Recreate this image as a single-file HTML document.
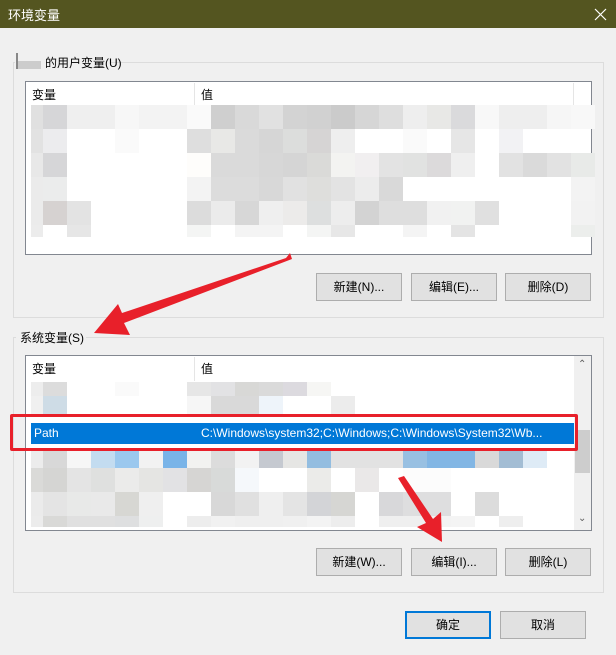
<!DOCTYPE html>
<html><head><meta charset="utf-8"><style>
*{box-sizing:border-box;margin:0;padding:0}
body{width:616px;height:655px;background:#f0f0f0;position:relative;overflow:hidden;font-family:"Liberation Sans","Noto Sans CJK SC",sans-serif;font-size:12px;color:#000}
.a{position:absolute}
.title{left:0;top:0;width:616px;height:28px;background:#545520;color:#fff;font-size:13px}
.grp{border:1px solid #dcdcdc}
.list{background:#fff;border:1px solid #828790}
.btn{background:#e1e1e1;border:1px solid #adadad;text-align:center;line-height:26px}
.cell{position:absolute}
</style></head><body>
<div class="a title"><span class="a" style="left:8px;top:5px">环境变量</span>
<svg class="a" style="left:594px;top:8px" width="13" height="13"><path d="M1 1L12 12M12 1L1 12" stroke="#fff" stroke-width="1.2"/></svg></div>

<div class="a grp" style="left:13px;top:62px;width:591px;height:256px"></div>
<div class="a" style="left:15px;top:52px;width:96px;height:20px;background:#f0f0f0"></div>
<div class="a" style="left:16px;top:53px;width:2px;height:16px;background:#888"></div>
<div class="a" style="left:18px;top:61px;width:23px;height:8px;background:#ccc"></div>
<span class="a" style="left:45px;top:54px">的用户变量(U)</span>

<div class="a list" id="l1" style="left:25px;top:81px;width:567px;height:174px">
<span class="a" style="left:6px;top:4px">变量</span>
<div class="a" style="left:168px;top:1px;width:1px;height:22px;background:#e5e5e5"></div>
<span class="a" style="left:175px;top:4px">值</span>
<div class="a" style="left:547px;top:1px;width:1px;height:22px;background:#e5e5e5"></div>
</div>
<div class="a btn" style="left:316px;top:273px;width:86px;height:28px">新建(N)...</div>
<div class="a btn" style="left:411px;top:273px;width:86px;height:28px">编辑(E)...</div>
<div class="a btn" style="left:505px;top:273px;width:86px;height:28px">删除(D)</div>

<div class="a grp" style="left:13px;top:337px;width:591px;height:256px"></div>
<div class="a" style="left:16px;top:328px;width:70px;height:18px;background:#f0f0f0"></div>
<span class="a" style="left:20px;top:329px">系统变量(S)</span>

<div class="a list" id="l2" style="left:25px;top:355px;width:567px;height:176px">
<span class="a" style="left:6px;top:4px">变量</span>
<div class="a" style="left:168px;top:1px;width:1px;height:24px;background:#e5e5e5"></div>
<span class="a" style="left:175px;top:4px">值</span>
<div class="a" style="left:548px;top:0;width:17px;height:174px;background:#f0f0f0"></div>
<div class="a" style="left:549px;top:74px;width:15px;height:43px;background:#cdcdcd"></div>
<span class="a" style="left:552px;top:3px;font-size:10px;color:#606060">⌃</span>
<span class="a" style="left:552px;top:157px;font-size:10px;color:#606060">⌄</span>
<div class="a" style="left:5px;top:67px;width:543px;height:21px;background:#0078d7;color:#fff">
<span class="a" style="left:3px;top:3px">Path</span>
<span class="a" style="left:170px;top:3px">C:\Windows\system32;C:\Windows;C:\Windows\System32\Wb...</span></div>
</div>

<div class="a btn" style="left:316px;top:548px;width:86px;height:28px">新建(W)...</div>
<div class="a btn" style="left:411px;top:548px;width:86px;height:28px">编辑(I)...</div>
<div class="a btn" style="left:505px;top:548px;width:86px;height:28px">删除(L)</div>

<div class="a btn" style="left:405px;top:611px;width:86px;height:28px;border:2px solid #0078d7;line-height:24px">确定</div>
<div class="a btn" style="left:500px;top:611px;width:86px;height:28px">取消</div>

<div class="a" style="left:10px;top:414px;width:568px;height:37px;border:3px solid #e8202a;border-radius:2px"></div>

<svg class="a" style="left:0;top:0" width="616" height="655">
<polygon fill="#e8202a" points="290,253 286,258 122,313 118,304 94,333 130,335 124,323 292,259"/>
<polygon fill="#e8202a" points="398,478 404,476 433,519 441,512 442,542 417,527 426,523"/>
</svg>

<script>
function grid(id,rows){
 var l=document.getElementById(id);
 rows.forEach(function(r){
  var x=5;
  r.c.forEach(function(c,i){
   var w=i==0?12:24;
   if(c){var d=document.createElement('div');d.className='cell';
   d.style.cssText='left:'+x+'px;top:'+r.y+'px;width:'+w+'px;height:'+r.h+'px;background:'+c;l.appendChild(d);}
   x+=w;});
 });
}
var W=null;
grid('l1',[
{y:23,h:24,c:['#e0e0e0','#d6d6d8','#efefef','#efefef','#f7f7f7','#f3f3f3','#f3f3f3','#fafafa','#cfcfcf','#d9d9d9','#e1e1e1','#d3d3d3','#d1d1d1','#cbcbcb','#d6d6d6','#dedede','#eeeeee','#e8e8e6','#dadadc','#f8f8f8','#eeeeee','#eeeeee','#f6f6f6','#f8f8f8']},
{y:47,h:24,c:['#e2e2e2','#ececee',W,W,'#fafafa',W,W,'#dedede','#e8e8e6','#dadada','#d6d6d6','#dcdddc','#d6d4d4','#eeeeee',W,W,'#fafafa',W,'#e6e6e6',W,'#f2f2f4',W,W]},
{y:71,h:24,c:['#e8e8e8','#d6d6d8',W,W,W,W,W,'#fefdfb','#dadada','#dadada','#d7d7d7','#d5d5d5','#dadad8','#f3f3f1','#f1eff0','#e3e3e3','#e1e2e1','#dcdadb','#efefef',W,'#e2e2e2','#dadada','#e2e2e2','#e8eae8']},
{y:95,h:24,c:['#ebebeb','#ebecec',W,W,W,W,W,'#f3f3f3','#dcdcdc','#dcdcdc','#d8d8d8','#e1e1e1','#dededc','#e3e3e3','#ececec','#d9d9d9',W,W,W,W,W,W,W,'#f3f3f3']},
{y:119,h:24,c:['#ebebeb','#d6d2d1','#e3e3e3',W,W,W,W,'#dcdcdc','#ebebeb','#d7d7d7','#efefef','#ecebea','#dddfdf','#ededed','#d3d3d3','#dedede','#dedede','#f1f1f1','#f1f2f1','#e0e0e0',W,W,W,'#f2f2f2']},
{y:143,h:12,c:['#ececec',W,'#e6e6e6',W,W,W,W,'#f4f5f4',W,'#f4f4f4','#f4f4f4',W,'#f4f5f4','#e7e7e7',W,W,'#f4f4f4',W,'#e4e4e4',W,W,W,W,'#eceeec']}
]);
grid('l2',[
{y:26,h:14,c:['#ededed','#dcdcdc',W,W,'#fafafa',W,W,'#e6e6e6','#e2e2e4','#d8d8d6','#dadada','#dcdadf','#f6f6f4',W,W,W,W,W,W,W,W,W]},
{y:40,h:18,c:['#f0f0f0','#cedce6',W,W,W,W,W,'#f6f6f6','#d9d9d9','#d9d9d9','#eef4fa',W,W,'#ececec',W,W,W,W,W,W,W,W]},
{y:95,h:17,c:['#ececec','#d8d8d8','#f6f6f6','#c3dcf0','#9bc8ee','#f2f2f2','#79b4e8','#f2f2f0','#dcdcdc','#f2f2f2','#c5c9d0','#e6e6e4','#93bde0','#e2e2e2','#e2e2e2','#e2e2e2','#98c0e2','#82b6e4','#82b6e4','#d9d9d9','#a3bdd4','#deebf6']},
{y:112,h:24,c:['#dadad8','#d5d5d3','#e4e4e4','#dfe0df','#ebebea','#e5e5e3','#e2e2e4','#d6d5d3','#d8dad9','#f5f8fb',W,W,'#ebebe9',W,'#eae8e8',W,'#fcfcfc','#fcfcfc',W,W,W,W]},
{y:136,h:24,c:['#ebebeb','#e4e4e4','#e8e9e8','#e9e9e9','#d7d7d3','#efefef',W,W,'#d8d8d8','#e0e0e0','#efefef','#e4e4e4','#d3d4d7','#d6d6d3',W,'#d8d8da','#dededf','#dededf',W,'#dcdcdc',W,W]},
{y:160,h:11,c:['#ececec','#d9d9d7','#e0e0e0','#e0e0e0','#dedfe0','#eeefef',W,'#ededed','#f1f1f1','#efefef','#efefef','#f0f0f0','#f3f3f3','#ededed',W,'#efefef','#efefef','#f3f3f3','#f4f4f4',W,'#eeeeee',W]}
]);
</script>
</body></html>
